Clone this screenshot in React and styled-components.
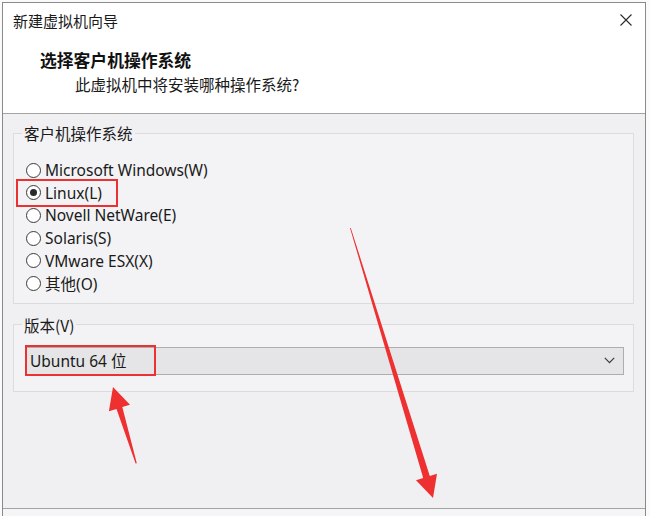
import React from 'react';
import styled, { createGlobalStyle } from 'styled-components';

const GlobalStyle = createGlobalStyle`
  html, body {
    margin: 0;
    padding: 0;
    background: #fafafa;
  }
  body {
    font-family: "Noto Sans", "Noto Sans CJK SC", sans-serif;
    color: #1a1a1a;
  }
`;

const Page = styled.div`
  position: relative;
  width: 650px;
  height: 516px;
  overflow: hidden;
  padding: 2px 0 0 2px;
  box-sizing: border-box;
`;

const Window = styled.div`
  width: 644px;
  height: 530px;
  box-sizing: border-box;
  border: 1px solid #8a8a8a;
  background: #f0f0f2;
  display: flex;
  flex-direction: column;
`;

const Header = styled.div`
  height: 110px;
  background: #ffffff;
  border-bottom: 1px solid #a3a3a3;
  display: flex;
  flex-direction: column;
`;

const TitleBar = styled.div`
  display: flex;
  align-items: center;
  justify-content: space-between;
  height: 22px;
  padding: 6px 13px 0 10px;
  font-family: "Noto Sans CJK SC", sans-serif;
  font-size: 15px;
  color: #1a1a1a;
`;

const CloseButton = styled.span`
  display: flex;
  width: 12px;
  height: 12px;
`;

const Heading = styled.div`
  margin: 17px 0 0 37px;
  line-height: 24px;
  font-family: "Noto Sans CJK SC", sans-serif;
  font-weight: 700;
  font-size: 16.8px;
  color: #111;
`;

const SubHeading = styled.div`
  margin: 1px 0 0 72px;
  line-height: 22px;
  font-family: "Noto Sans CJK SC", sans-serif;
  font-size: 15.5px;
  color: #1a1a1a;
`;

const Body = styled.div`
  height: 394px;
  box-sizing: border-box;
  padding: 9px 11px 0 10px;
  display: flex;
  flex-direction: column;
  gap: 11px;
`;

const GroupBox = styled.fieldset`
  margin: 0;
  padding: ${p => p.$pad};
  min-inline-size: 0;
  border: 1px solid #dcdcde;
  background: #f3f3f5;
`;

const Legend = styled.legend`
  margin-left: -4px;
  padding: 0 2px;
  line-height: 20px;
  font-family: "Noto Sans CJK SC", sans-serif;
  font-size: 15.5px;
  color: #1a1a1a;
`;

const RadioRow = styled.label`
  display: flex;
  align-items: center;
  gap: 4px;
  height: 22.6px;
  font-family: "Noto Sans", "Noto Sans CJK SC", sans-serif;
  font-size: 15.5px;
  color: #1a1a1a;
`;

const RadioDot = styled.span`
  flex-shrink: 0;
  width: 15px;
  height: 15px;
  box-sizing: border-box;
  border: 1px solid #3a3a3a;
  border-radius: 50%;
  background: #fff;
  display: flex;
  align-items: center;
  justify-content: center;

  &::after {
    content: '';
    width: 7px;
    height: 7px;
    border-radius: 50%;
    background: ${p => (p.$checked ? '#2a2a2a' : 'transparent')};
  }
`;

const Marked = styled.span`
  position: relative;
  display: flex;
  align-items: center;
  gap: 4px;

  &::after {
    content: '';
    position: absolute;
    left: -10px;
    right: -16px;
    top: -3px;
    bottom: -3px;
    border: 2px solid #ec3133;
  }
`;

const Select = styled.div`
  position: relative;
  height: 28px;
  box-sizing: border-box;
  border: 1px solid #adadad;
  background: #e5e5e7;
  display: flex;
  align-items: center;
  justify-content: space-between;
  padding: 0 8px 0 3px;
  font-family: "Noto Sans", "Noto Sans CJK SC", sans-serif;
  font-size: 15.5px;
  color: #1a1a1a;

  &::after {
    content: '';
    position: absolute;
    left: -2px;
    top: -3px;
    width: 131px;
    height: 31px;
    box-sizing: border-box;
    border: 2px solid #ec3133;
  }
`;

const Footer = styled.div`
  flex: 1;
  border-top: 1px solid #a3a3a3;
  background: #f5f5f7;
`;

const Annotations = styled.svg`
  position: absolute;
  left: 0;
  top: 0;
  pointer-events: none;
`;

const systems = [
  { label: 'Microsoft Windows(W)' },
  { label: 'Linux(L)', checked: true },
  { label: 'Novell NetWare(E)' },
  { label: 'Solaris(S)' },
  { label: 'VMware ESX(X)' },
  { label: '其他(O)' },
];

export default function App() {
  return (
    <>
      <GlobalStyle />
      <Page>
        <Window>
          <Header>
            <TitleBar>
              <span>新建虚拟机向导</span>
              <CloseButton>
                <svg width="12" height="12" viewBox="0 0 12 12">
                  <path d="M0.5 0.5 L11.5 11.5 M11.5 0.5 L0.5 11.5" stroke="#2b2b2b" strokeWidth="1.1" fill="none" />
                </svg>
              </CloseButton>
            </TitleBar>
            <Heading>选择客户机操作系统</Heading>
            <SubHeading>此虚拟机中将安装哪种操作系统?</SubHeading>
          </Header>
          <Body>
            <GroupBox $pad="16px 0 8px 12px">
              <Legend>客户机操作系统</Legend>
              {systems.map(s => (
                <RadioRow key={s.label}>
                  {s.checked ? (
                    <Marked>
                      <RadioDot $checked />
                      {s.label}
                    </Marked>
                  ) : (
                    <>
                      <RadioDot />
                      {s.label}
                    </>
                  )}
                </RadioRow>
              ))}
            </GroupBox>
            <GroupBox $pad="12px 9px 16px 12px">
              <Legend>版本(V)</Legend>
              <Select>
                <span>Ubuntu 64 位</span>
                <svg width="11" height="7" viewBox="0 0 11 7">
                  <path d="M0.8 0.8 L5.5 5.6 L10.2 0.8" stroke="#3a3a3a" strokeWidth="1.2" fill="none" />
                </svg>
              </Select>
            </GroupBox>
          </Body>
          <Footer />
        </Window>
        <Annotations width="650" height="516" viewBox="0 0 650 516">
          <polygon
            fill="#ee3030"
            points="113,387 130,404.8 122.3,407.1 136.8,463.2 135.6,463.4 116.5,408.9 108.9,411.2"
          />
          <polygon
            fill="#ee3030"
            points="350,228 350.8,228 429.8,476 437,473.8 433,498 416,480.2 423.2,478"
          />
        </Annotations>
      </Page>
    </>
  );
}
